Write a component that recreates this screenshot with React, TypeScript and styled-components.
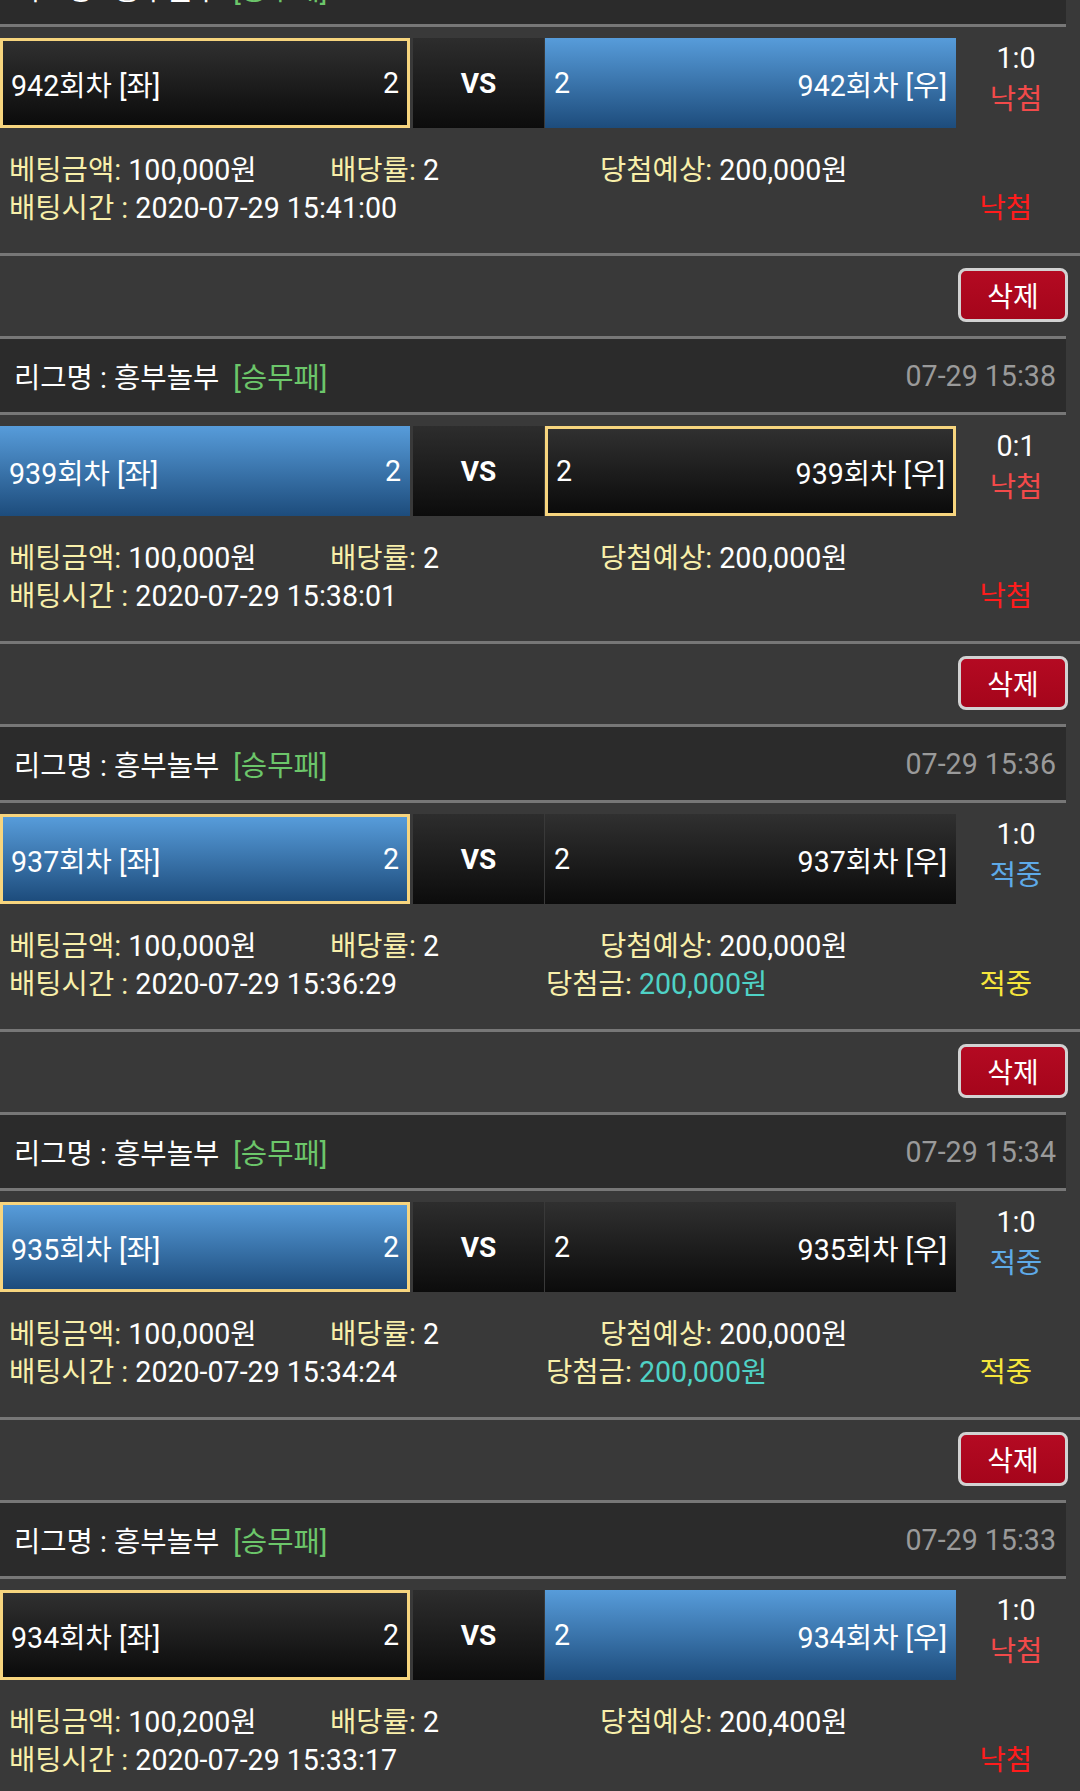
import styled, { createGlobalStyle, css } from 'styled-components';

type Side = { label: string; odds: string; blue: boolean; picked: boolean };
type Bet = {
    id: number;
    date: string;
    left: Side;
    right: Side;
    score: string;
    hit: boolean;
    amount: string;
    expected: string;
    time: string;
    prize?: string;
};

const bets: Bet[] = [
    {
        id: 942,
        date: '07-29 15:41',
        left: { label: '942회차 [좌]', odds: '2', blue: false, picked: true },
        right: { label: '942회차 [우]', odds: '2', blue: true, picked: false },
        score: '1:0',
        hit: false,
        amount: '100,000원',
        expected: '200,000원',
        time: '2020-07-29 15:41:00',
    },
    {
        id: 939,
        date: '07-29 15:38',
        left: { label: '939회차 [좌]', odds: '2', blue: true, picked: false },
        right: { label: '939회차 [우]', odds: '2', blue: false, picked: true },
        score: '0:1',
        hit: false,
        amount: '100,000원',
        expected: '200,000원',
        time: '2020-07-29 15:38:01',
    },
    {
        id: 937,
        date: '07-29 15:36',
        left: { label: '937회차 [좌]', odds: '2', blue: true, picked: true },
        right: { label: '937회차 [우]', odds: '2', blue: false, picked: false },
        score: '1:0',
        hit: true,
        amount: '100,000원',
        expected: '200,000원',
        time: '2020-07-29 15:36:29',
        prize: '200,000원',
    },
    {
        id: 935,
        date: '07-29 15:34',
        left: { label: '935회차 [좌]', odds: '2', blue: true, picked: true },
        right: { label: '935회차 [우]', odds: '2', blue: false, picked: false },
        score: '1:0',
        hit: true,
        amount: '100,000원',
        expected: '200,000원',
        time: '2020-07-29 15:34:24',
        prize: '200,000원',
    },
    {
        id: 934,
        date: '07-29 15:33',
        left: { label: '934회차 [좌]', odds: '2', blue: false, picked: true },
        right: { label: '934회차 [우]', odds: '2', blue: true, picked: false },
        score: '1:0',
        hit: false,
        amount: '100,200원',
        expected: '200,400원',
        time: '2020-07-29 15:33:17',
    },
];

export default function App() {
    return (
        <>
            <GlobalStyle />
            <List>
                {bets.map((bet) => (
                    <Card key={bet.id}>
                        <LeagueBar>
                            <span>
                                리그명 : 흥부놀부<Tag>[승무패]</Tag>
                            </span>
                            <DateText>{bet.date}</DateText>
                        </LeagueBar>
                        <MatchRow>
                            <TeamBox side="left" blue={bet.left.blue} picked={bet.left.picked}>
                                <span>{bet.left.label}</span>
                                <span>{bet.left.odds}</span>
                            </TeamBox>
                            <Vs>VS</Vs>
                            <TeamBox side="right" blue={bet.right.blue} picked={bet.right.picked}>
                                <span>{bet.right.odds}</span>
                                <span>{bet.right.label}</span>
                            </TeamBox>
                            <Score>
                                <div>{bet.score}</div>
                                <ScoreResult hit={bet.hit}>{bet.hit ? '적중' : '낙첨'}</ScoreResult>
                            </Score>
                        </MatchRow>
                        <Details>
                            <Line>
                                <Cell width={321}>
                                    <Label>베팅금액:</Label> {bet.amount}
                                </Cell>
                                <Cell width={270}>
                                    <Label>배당률:</Label> 2
                                </Cell>
                                <Cell>
                                    <Label>당첨예상:</Label> {bet.expected}
                                </Cell>
                            </Line>
                            <Line>
                                <Cell width={537}>
                                    <Label>배팅시간 :</Label> {bet.time}
                                </Cell>
                                <Cell grow>
                                    {bet.prize && (
                                        <>
                                            <Label>당첨금:</Label> <Prize>{bet.prize}</Prize>
                                        </>
                                    )}
                                </Cell>
                                <Result hit={bet.hit}>{bet.hit ? '적중' : '낙첨'}</Result>
                            </Line>
                        </Details>
                        <ActionBar>
                            <DeleteButton>삭제</DeleteButton>
                        </ActionBar>
                    </Card>
                ))}
            </List>
        </>
    );
}

const GlobalStyle = createGlobalStyle`
    html, body {
        margin: 0;
        padding: 0;
        overflow: hidden;
        background: #393939;
    }
    body {
        font-family: Roboto, "Noto Sans CJK KR", sans-serif;
        font-size: 28.6px;
        color: #fff;
    }
`;

// list is scrolled, so the first card's league bar sits above the fold
const List = styled.div`
    margin-top: -52px;
`;

const Card = styled.div`
    display: flex;
    flex-direction: column;
`;

const LeagueBar = styled.div`
    width: 1066px;
    height: 79px;
    box-sizing: border-box;
    display: flex;
    align-items: center;
    justify-content: space-between;
    padding: 0 10px 0 14px;
    background: #2b2b2b;
    border-top: 3px solid #777;
    border-bottom: 3px solid #777;
`;

const Tag = styled.span`
    color: #6cc66a;
    margin-left: 14px;
`;

const DateText = styled.span`
    color: #9a9a9a;
`;

const MatchRow = styled.div`
    display: flex;
    height: 90px;
    margin-top: 11px;
`;

const TeamBox = styled.div<{ side: 'left' | 'right'; blue: boolean; picked: boolean }>`
    width: ${({ side }) => (side === 'left' ? 410 : 411)}px;
    flex-shrink: 0;
    box-sizing: border-box;
    display: flex;
    align-items: center;
    justify-content: space-between;
    padding: 0 9px;
    background: ${({ blue }) =>
        blue ? 'linear-gradient(to bottom, #579cda, #1d4c7c)' : 'linear-gradient(to bottom, #303030, #0b0b0b)'};
    ${({ picked }) =>
        picked &&
        css`
            padding: 0 8px;
            border: 3px solid #f7d57e;
        `}
`;

const Vs = styled.div`
    width: 131px;
    flex-shrink: 0;
    margin: 0 1px 0 3px;
    display: flex;
    align-items: center;
    justify-content: center;
    font-weight: 700;
    font-size: 28px;
    background: linear-gradient(to bottom, #2d2d2d, #0c0c0c);
`;

const Score = styled.div`
    flex: 1;
    text-align: center;
    line-height: 41px;
    padding-right: 4px;
`;

const ScoreResult = styled.div<{ hit: boolean }>`
    color: ${({ hit }) => (hit ? '#5eaae8' : '#f24a4a')};
`;

const Details = styled.div`
    padding: 23px 9px 26px;
    line-height: 38px;
    border-bottom: 3px solid #777;
`;

const Line = styled.div`
    display: flex;
    white-space: nowrap;
`;

const Cell = styled.div<{ width?: number; grow?: boolean }>`
    ${({ width }) => width && `width: ${width}px; flex-shrink: 0;`}
    ${({ grow }) => grow && 'flex: 1;'}
`;

const Label = styled.span`
    color: #f8efaa;
`;

const Prize = styled.span`
    color: #4fd2c6;
`;

const Result = styled.div<{ hit: boolean }>`
    margin-right: 39px;
    color: ${({ hit }) => (hit ? '#f6e63c' : '#ff1c1c')};
`;

const ActionBar = styled.div`
    height: 80px;
    display: flex;
    justify-content: flex-end;
    align-items: flex-start;
    padding: 12px 12px 0 0;
    box-sizing: border-box;
`;

const DeleteButton = styled.button`
    width: 110px;
    height: 54px;
    border: 3px solid #d2d2d2;
    border-radius: 8px;
    background: linear-gradient(to bottom, #b40a22, #a5051b);
    color: #fff;
    font-family: Roboto, "Noto Sans CJK KR", sans-serif;
    font-size: 28px;
    padding: 0;
`;
